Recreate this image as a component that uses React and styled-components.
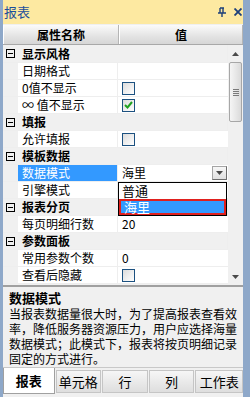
import React from "react";
import styled, { createGlobalStyle } from "styled-components";

const Global = createGlobalStyle`
  html, body {
    margin: 0;
    padding: 0;
    background: #ffffff;
  }
  body {
    font-family: "Noto Sans CJK SC", "Liberation Sans", sans-serif;
    font-size: 12px;
  }
`;

const Window = styled.div`
  position: relative;
  width: 250px;
  height: 397px;
  box-sizing: border-box;
  display: flex;
  flex-direction: column;
  background: #f0f0f0;
  border-left: 3px solid #8ea8c9;
  border-right: 7px solid #8ea8c9;
  overflow: hidden;
`;

const TitleBar = styled.div`
  height: 24px;
  margin: 0 -7px 1px -3px;
  padding: 0 8px 0 4px;
  display: flex;
  align-items: center;
  background: #fde9a1;
  color: #1d4f9b;
  font-size: 13px;
`;

const TitleText = styled.span`
  flex: 1;
  line-height: 24px;
`;

const TitleIcons = styled.div`
  display: flex;
  align-items: center;
  gap: 8px;
`;

const Header = styled.div`
  display: grid;
  grid-template-columns: 116px 1fr;
  height: 19px;
  background: linear-gradient(#fbfbfb, #e3e3e3 60%, #d6d6d6);
  border-bottom: 1px solid #a8a8a8;
`;

const HeaderCell = styled.div`
  display: flex;
  align-items: center;
  justify-content: center;
  font-weight: bold;
  font-size: 12px;
  color: #000;
  border-right: 1px solid #b5b5b5;
  border-left: 1px solid #ffffff;
`;

const Body = styled.div`
  display: flex;
  height: 240px;
  background: #f0f0f0;
  border-bottom: 2px solid #a0a0a0;
`;

const Rows = styled.div`
  position: relative;
  width: 225px;
  display: flex;
  flex-direction: column;
`;

const Row = styled.div`
  display: grid;
  grid-template-columns: 15px 100px 1fr;
  height: ${(p) => (p.$first ? 18 : 17)}px;
  box-sizing: border-box;
  background: ${(p) => (p.$category ? "#f0f0f0" : "#ffffff")};
  border-bottom: 1px solid #eeeeee;
`;

const Gutter = styled.div`
  background: #f0f0f0;
  display: flex;
  align-items: center;
  justify-content: center;
`;

const Name = styled.div`
  padding-left: 4px;
  display: flex;
  align-items: center;
  line-height: 16px;
  white-space: nowrap;
  color: ${(p) => (p.$selected ? "#ffffff" : "#000")};
  background: ${(p) => (p.$selected ? "#3399ff" : "transparent")};
  border-right: 1px solid #eeeeee;
  font-weight: ${(p) => (p.$category ? "bold" : "normal")};
  grid-column: ${(p) => (p.$category ? "2 / 4" : "auto")};
`;

const Value = styled.div`
  padding-left: 4px;
  display: flex;
  align-items: center;
  line-height: 16px;
  white-space: nowrap;
`;

const ValueText = styled.span`
  flex: 1;
`;

const Box = styled.span`
  width: 11px;
  height: 11px;
  border: 1px solid #1c5180;
  background: linear-gradient(135deg, #dcdcdc, #ffffff);
  display: inline-flex;
  align-items: center;
  justify-content: center;
`;

const Collapse = styled.span`
  width: 7px;
  height: 7px;
  border: 1px solid #000;
  display: inline-flex;
  align-items: center;
  justify-content: center;
  &::after {
    content: "";
    width: 5px;
    height: 1px;
    background: #000;
  }
`;

const DropButton = styled.span`
  width: 15px;
  height: 14px;
  margin-right: 1px;
  box-sizing: border-box;
  border: 1px solid #a5a5a5;
  border-right-color: #6d6d6d;
  border-bottom-color: #6d6d6d;
  background: linear-gradient(#f7f7f7, #e0e0e0);
  display: inline-flex;
  align-items: center;
  justify-content: center;
`;

const Popup = styled.div`
  position: absolute;
  left: 115px;
  top: 137px;
  width: 109px;
  box-sizing: border-box;
  border: 1px solid #000;
  background: #fff;
`;

const PopupItem = styled.div`
  height: 16px;
  box-sizing: border-box;
  padding-left: 3px;
  line-height: 16px;
  font-size: 13px;
  color: ${(p) => (p.$active ? "#fff" : "#000")};
  background: ${(p) => (p.$active ? "#3399ff" : "#fff")};
  border: ${(p) => (p.$active ? "2px solid #e0201e" : "none")};
  line-height: ${(p) => (p.$active ? "12px" : "16px")};
`;

const Scrollbar = styled.div`
  width: 15px;
  display: flex;
  flex-direction: column;
  align-items: center;
  background: #f0f0f0;
`;

const Arrow = styled.div`
  height: 17px;
  display: flex;
  align-items: center;
  justify-content: center;
`;

const Track = styled.div`
  flex: 1;
  width: 100%;
`;

const Thumb = styled.div`
  margin: 0 1px;
  height: 60px;
  box-sizing: border-box;
  border: 1px solid #a7a7a7;
  border-radius: 2px;
  background: linear-gradient(90deg, #f5f5f5, #e8e8e8 50%, #dadada);
  display: flex;
  flex-direction: column;
  align-items: center;
  justify-content: center;
  gap: 1px;
`;

const Grip = styled.span`
  width: 6px;
  height: 1px;
  background: #7a7a7a;
`;

const Description = styled.div`
  height: 78px;
  padding: 2px 0 0 6px;
  background: #f0f0f0;
  border-bottom: 1px solid #c8c8c8;
  line-height: 15px;
  font-size: 12px;
  color: #000;
`;

const DescTitle = styled.div`
  font-weight: bold;
  font-size: 13px;
  line-height: 17px;
`;

const Line = styled.div`
  white-space: nowrap;
`;

const Tabs = styled.div`
  display: flex;
  gap: 1px;
  padding-top: 2px;
  height: 27px;
  background: #f0f0f0;
`;

const Tab = styled.div`
  width: ${(p) => p.$w}px;
  height: ${(p) => (p.$active ? 26 : 23)}px;
  margin-top: ${(p) => (p.$active ? -2 : 0)}px;
  box-sizing: border-box;
  display: flex;
  align-items: center;
  justify-content: center;
  font-size: 13px;
  font-weight: ${(p) => (p.$active ? "bold" : "normal")};
  color: #000;
  background: ${(p) =>
    p.$active ? "#ffffff" : "linear-gradient(#f6f6f6, #dedede)"};
  border: 1px solid ${(p) => (p.$active ? "#a0a0a0" : "#c5c5c5")};
  border-top: ${(p) => (p.$active ? "none" : "1px solid #c5c5c5")};
`;

const Check = () => (
  <svg width="9" height="8" viewBox="0 0 9 8">
    <path d="M1 4 L3.5 6.5 L8 1" stroke="#21a121" strokeWidth="2" fill="none" />
  </svg>
);

const Tri = ({ up }) => (
  <svg width="7" height="4" viewBox="0 0 7 4">
    <path d={up ? "M0 4 L3.5 0 L7 4 Z" : "M0 0 L7 0 L3.5 4 Z"} fill="#4a4a4a" />
  </svg>
);

const rows = [
  { cat: true, name: "显示风格" },
  { name: "日期格式" },
  { name: "0值不显示", box: true },
  { name: "∞ 值不显示", box: true, checked: true },
  { cat: true, name: "填报" },
  { name: "允许填报", box: true },
  { cat: true, name: "模板数据" },
  { name: "数据模式", value: "海里", selected: true },
  { name: "引擎模式" },
  { cat: true, name: "报表分页" },
  { name: "每页明细行数", value: "20" },
  { cat: true, name: "参数面板" },
  { name: "常用参数个数", value: "0" },
  { name: "查看后隐藏", box: true },
];

const tabs = [
  { label: "报表", w: 52, active: true },
  { label: "单元格", w: 46 },
  { label: "行", w: 46 },
  { label: "列", w: 46 },
  { label: "工作表", w: 48 },
];

export default function App() {
  return (
    <>
      <Global />
      <Window>
        <TitleBar>
          <TitleText>报表</TitleText>
          <TitleIcons>
            <svg width="8" height="10" viewBox="0 0 8 10">
              <path d="M2 1 H6 M2 1 V6 M5 1 V6 M0 6 H8 M4 6 V10" stroke="#1d3f7a" strokeWidth="1.4" fill="none" />
            </svg>
            <svg width="8" height="8" viewBox="0 0 8 8">
              <path d="M0.5 0.5 L7.5 7.5 M7.5 0.5 L0.5 7.5" stroke="#1d3f7a" strokeWidth="1.8" />
            </svg>
          </TitleIcons>
        </TitleBar>
        <Header>
          <HeaderCell>属性名称</HeaderCell>
          <HeaderCell>值</HeaderCell>
        </Header>
        <Body>
          <Rows>
            {rows.map((r, i) => (
              <Row key={r.name} $category={r.cat} $first={i === 0}>
                <Gutter>{r.cat && <Collapse />}</Gutter>
                <Name $category={r.cat} $selected={r.selected}>
                  {r.name}
                </Name>
                {!r.cat && (
                  <Value>
                    {r.box ? (
                      <Box>{r.checked && <Check />}</Box>
                    ) : (
                      <ValueText>{r.value}</ValueText>
                    )}
                    {r.selected && (
                      <DropButton>
                        <Tri />
                      </DropButton>
                    )}
                  </Value>
                )}
              </Row>
            ))}
            <Popup>
              <PopupItem>普通</PopupItem>
              <PopupItem $active>海里</PopupItem>
            </Popup>
          </Rows>
          <Scrollbar>
            <Arrow>
              <Tri up />
            </Arrow>
            <Track>
              <Thumb>
                <Grip />
                <Grip />
                <Grip />
                <Grip />
              </Thumb>
            </Track>
            <Arrow>
              <Tri />
            </Arrow>
          </Scrollbar>
        </Body>
        <Description>
          <DescTitle>数据模式</DescTitle>
          <Line>当报表数据量很大时，为了提高报表查看效</Line>
          <Line>率，降低服务器资源压力，用户应选择海量</Line>
          <Line>数据模式；此模式下，报表将按页明细记录</Line>
          <Line>固定的方式进行。</Line>
        </Description>
        <Tabs>
          {tabs.map((t) => (
            <Tab key={t.label} $w={t.w} $active={t.active}>
              {t.label}
            </Tab>
          ))}
        </Tabs>
      </Window>
    </>
  );
}
